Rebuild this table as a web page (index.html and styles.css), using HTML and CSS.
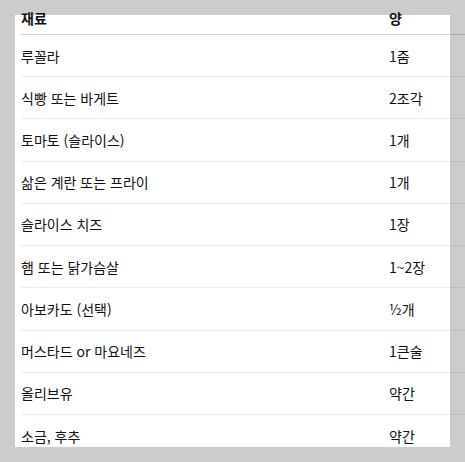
FILE: index.html
```html
<!DOCTYPE html>
<html lang="ko">
<head>
<meta charset="utf-8">
<link rel="stylesheet" href="styles.css">
</head>
<body>
<div class="panel">
  <table class="ingredients">
    <thead>
      <tr><th class="name">재료</th><th class="qty">양</th></tr>
    </thead>
    <tbody>
      <tr><td>루꼴라</td><td>1줌</td></tr>
      <tr><td>식빵 또는 바게트</td><td>2조각</td></tr>
      <tr><td>토마토 (슬라이스)</td><td>1개</td></tr>
      <tr><td>삶은 계란 또는 프라이</td><td>1개</td></tr>
      <tr><td>슬라이스 치즈</td><td>1장</td></tr>
      <tr><td>햄 또는 닭가슴살</td><td>1~2장</td></tr>
      <tr><td>아보카도 (선택)</td><td>½개</td></tr>
      <tr><td>머스타드 or 마요네즈</td><td>1큰술</td></tr>
      <tr><td>올리브유</td><td>약간</td></tr>
      <tr><td>소금, 후추</td><td>약간</td></tr>
    </tbody>
  </table>
</div>
</body>
</html>
```
FILE: styles.css
```css
html {
  background: #cccccc;
  overflow: hidden;
}
body {
  margin: 0;
  font-family: "Noto Sans CJK KR", "Noto Sans", sans-serif;
  font-size: 14px;
  color: #111;
}
.panel {
  display: flow-root;
  margin: 15px 15px 0;
  height: 432px;
  background: #fff;
}
.ingredients {
  border-collapse: collapse;
  margin-left: 6px;
  margin-top: -13px;
  width: 470px;
}
.ingredients th {
  text-align: left;
  font-weight: bold;
  height: 32px;
  padding: 0;
  vertical-align: middle;
  border-bottom: 1px solid rgba(0, 0, 0, 0.17);
}
.ingredients th.name {
  width: 368px;
}
.ingredients td {
  height: 41.22px;
  padding: 0;
  vertical-align: middle;
  border-bottom: 1px solid rgba(0, 0, 0, 0.07);
}
.ingredients tbody tr:last-child td {
  border-bottom: none;
}
```
